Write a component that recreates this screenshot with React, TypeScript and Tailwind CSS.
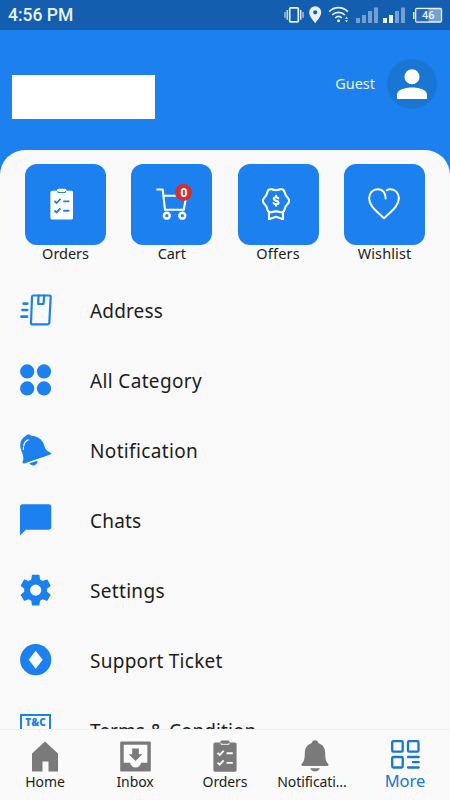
import React from 'react';

type IconProps = { className?: string };

function ClipboardIcon({ className, mark }: IconProps & { mark: string }) {
  return (
    <svg viewBox="0 0 24 32" className={className} fill="currentColor">
      <path d="M2.500 2.500H7C7.300 1 8.200.4 9.500.4h5c1.300 0 2.200.6 2.500 2.100h4.500c1.500 0 2.100.8 2.100 2V30c0 1.200-.8 1.800-2 1.800H2.400c-1.200 0-2-.6-2-1.800V4.500c0-1.200.7-2 2.100-2Z" />
      <g fill="none" stroke={mark} strokeWidth="1.900">
        <path d="M8 2.800v1.500h8V2.800" strokeWidth="1" />
        <path d="m4.500 13 2.200 2 4-4.200M13.500 13.300h6.300M4.500 22.600l2.200 2 4-4.200M13.500 22.900h6.300" />
      </g>
    </svg>
  );
}

function CartIcon({ className }: IconProps) {
  return (
    <svg viewBox="0 0 32 32" className={className} fill="none" stroke="currentColor" strokeWidth="2.100" strokeLinecap="round" strokeLinejoin="round">
      <path d="M1.200 1.500h5.500l2.300 20.300h18.800l2.500-14H8" />
      <circle cx="10.800" cy="27.700" r="2.900" strokeWidth="2.500" />
      <circle cx="26.300" cy="27.700" r="2.900" strokeWidth="2.500" />
    </svg>
  );
}

function OfferIcon({ className }: IconProps) {
  return (
    <svg viewBox="0 0 28 32" className={className} fill="none" stroke="currentColor" strokeWidth="2.100" strokeLinejoin="round" strokeLinecap="round">
      <path d="M9.500 1.300Q14 3 18.500 1.300c2-.4 3.500.6 4 2.500.5 2.700 1.400 4.300 3.400 6.300 1.700 1.800 1.700 3.700 0 5.500-2 2-2.900 3.500-3.400 6.100-.5 2-2 2.900-4 2.500q-4.500-1.600-9 0c-2 .4-3.500-.5-4-2.500-.5-2.600-1.400-4.100-3.400-6.100-1.700-1.800-1.700-3.700 0-5.500 2-2 2.900-3.600 3.400-6.300.5-1.900 2-2.900 4-2.500Z" />
      <path d="M7 24.200v7L14 28.700l7 2.500v-7" />
      <path d="M16.300 10.300c-.4-.8-1.100-1.100-2.200-1.100-1.400 0-2.300.6-2.300 1.600 0 2.500 4.700 1.200 4.700 3.700 0 1.200-.9 1.800-2.400 1.800-1.300 0-2.100-.5-2.500-1.300M14 7.700v1.500M14 16.400v1.400" />
    </svg>
  );
}

function HeartIcon({ className }: IconProps) {
  return (
    <svg viewBox="0 0 32 32" className={className} fill="none" stroke="currentColor" strokeWidth="2" strokeLinecap="round" strokeLinejoin="round">
      <path d="M17.700 10.500c.1-5.200-2.900-9.200-7.900-9.200-5.200 0-8.700 3.900-8.700 9C1.100 18 8.500 23.300 16 30.200c7.500-6.900 14.900-12.200 14.900-19.900 0-5.100-3.500-9-8.700-9-1.300 0-2.500.3-3.400 1" />
    </svg>
  );
}

function AddressIcon() {
  return (
    <svg viewBox="0 0 32 32" className="size-8" fill="none" stroke="currentColor" strokeWidth="2.200" strokeLinecap="round" strokeLinejoin="round">
      <path d="M13 1.500h16.500c.9 0 1.300.6 1.200 1.400L29.300 29c-.1.900-.6 1.400-1.500 1.400H12.200c-.9 0-1.300-.5-1.200-1.400l1-26.100c0-.9.300-1.400 1-1.400Z" />
      <path d="M18.500 1.700 18.200 10h5.300l.7-8.300" />
      <path d="M3.700 9.700h3.500M2.500 16h4.700M1.500 22.700H7" strokeWidth="2.700" />
    </svg>
  );
}

function CategoryIcon() {
  return (
    <svg viewBox="0 0 32 32" className="size-8" fill="currentColor">
      <circle cx="7.200" cy="7.400" r="7.100" />
      <circle cx="24" cy="7.400" r="7.100" />
      <circle cx="7.200" cy="24.400" r="7.100" />
      <circle cx="24" cy="24.400" r="7.100" />
    </svg>
  );
}

function TiltedBellIcon() {
  return (
    <svg viewBox="0 0 32 32" className="size-8" fill="currentColor">
      <path d="M5.600 2.100C6.200.9 7.300.4 8.500.4c1.300 0 2.100.6 2.700 1.400 5.200.2 9.800 2.600 12 7 1.300 2.800 1.400 5 3.100 7.100 1.300 1.600 4.100 2 4.900 3.500.2.500-.2.800-.8 1L4.300 29.500c-1.100.3-1.900-.3-1.700-1.300.4-1.800 1-3.300.7-5.200C2.700 18.900.4 15.900.2 11.600.1 7.500 2 4 5.600 2.100Z" />
      <path d="m9.300 29.200 8.300-2.400c.2 2.300-1.500 4.200-3.500 4.600-2 .3-3.800-.7-4.800-2.200Z" />
      <path d="M3.400 15.500v-2.200M3.700 11.800c.4-2.900 2-4.900 4.500-5.900" fill="none" stroke="#f9f9f9" strokeWidth="1.200" strokeLinecap="round" />
    </svg>
  );
}

function ChatIcon() {
  return (
    <svg viewBox="0 0 32 32" className="size-8" fill="currentColor">
      <path d="M2.500.3h26.300c1.500 0 2.500 1 2.500 2.500v20.500c0 1.500-1 2.500-2.500 2.500H6L0 31.500V2.800C0 1.300 1 .3 2.500.3Z" />
    </svg>
  );
}

function GearIcon() {
  return (
    <svg viewBox="2.200 1.900 20 20" className="size-8" fill="currentColor">
      <path d="M19.140 12.940c.04-.3.060-.61.060-.94 0-.32-.02-.64-.07-.94l2.030-1.580c.18-.14.23-.41.120-.61l-1.920-3.320c-.12-.22-.37-.29-.59-.22l-2.390.96c-.5-.38-1.030-.7-1.620-.94l-.36-2.540c-.04-.24-.24-.41-.48-.41h-3.840c-.24 0-.43.17-.47.41l-.36 2.540c-.59.24-1.130.57-1.620.94l-2.390-.96c-.22-.08-.47 0-.59.22L2.740 8.870c-.12.21-.08.47.120.61l2.030 1.580c-.05.3-.09.630-.09.94s.02.64.070.94l-2.030 1.580c-.18.14-.23.410-.12.61l1.920 3.320c.12.22.37.29.59.22l2.390-.96c.5.38 1.030.7 1.620.94l.36 2.540c.05.24.24.41.48.41h3.840c.24 0 .44-.17.47-.41l.36-2.540c.59-.24 1.130-.56 1.620-.94l2.390.96c.22.08.47 0 .59-.22l1.920-3.320c.12-.22.070-.47-.12-.61l-2.010-1.580ZM12 15.500A3.500 3.500 0 1 1 12 8.500a3.500 3.500 0 0 1 0 7Z" />
    </svg>
  );
}

function TicketIcon() {
  return (
    <svg viewBox="0 0 32 32" className="size-8" fill="currentColor">
      <circle cx="15.700" cy="15.700" r="15.600" />
      <path d="m15.700 6.800 7 9-7 9-7-9Z" fill="#f9f9f9" />
    </svg>
  );
}

function TermsIcon() {
  return (
    <div className="h-8 w-[31px] border-2 border-[#1c80ee] pt-[1px] text-center font-['Open_Sans',sans-serif] text-[10px] leading-[11px] font-extrabold">
      T&amp;C
    </div>
  );
}

function HomeIcon() {
  return (
    <svg viewBox="0 0 26 31" className="h-[31px] w-[26px]" fill="currentColor">
      <path d="M0 12.500 13 .5l13 12v18h-9.500V20.500h-6v10H0Z" />
    </svg>
  );
}

function InboxIcon() {
  return (
    <svg viewBox="0 0 31 31" className="size-[31px]">
      <path fill="currentColor" fillRule="evenodd" d="M1.500.5h28c.9 0 1.300.4 1.300 1.300v27.400c0 .9-.4 1.300-1.300 1.300h-28C.6 30.500.2 30.100.2 29.200V1.800C.2.900.6.500 1.500.5ZM3.700 3.700v18h6.400c.8 2.800 2.700 4.800 5.500 4.800s4.700-2 5.500-4.800h6.300v-18Z" />
      <path fill="currentColor" d="M12.200 7.500h6.600v5.700h3.500l-6.800 6.700-6.700-6.700h3.400Z" />
    </svg>
  );
}

function BellIcon() {
  return (
    <svg viewBox="0 0 28 32" className="h-8 w-7" fill="currentColor">
      <path d="M14 .3c1.700 0 3 1.100 3.200 2.600 4.500 1.400 7 5 7 9.600 0 6.600.7 9 3 11.200.7 1 .2 2.300-1.100 2.300H1.900C.6 26 .1 24.700.8 23.700c2.300-2.200 3-4.600 3-11.200 0-4.600 2.500-8.200 7-9.600C11 1.400 12.300.3 14 .3ZM9.200 28.200h9.600c-.6 2-2.500 3.100-4.800 3.100s-4.200-1.100-4.800-3.100Z" />
    </svg>
  );
}

function MoreIcon() {
  return (
    <svg viewBox="0 0 29 29" className="size-[29px]" fill="none" stroke="currentColor" strokeWidth="2.300" strokeLinecap="round">
      <rect x="1.200" y="1.200" width="10.500" height="10.500" rx="1.200" />
      <rect x="17" y="1.200" width="10.500" height="10.500" rx="1.200" />
      <rect x="1.200" y="17" width="10.500" height="10.500" rx="1.200" />
      <path d="M17 17h10.700M22 22.200h5.700M17 27.500h10.700" />
    </svg>
  );
}

function StatusIcons() {
  return (
    <svg viewBox="0 0 160 20" className="h-5 w-40" fill="#e8f3fc">
      <g fill="none" stroke="#e8f3fc">
        <rect x="5.700" y="2.800" width="8.600" height="14" rx=".8" strokeWidth="1.700" />
        <path d="M3.200 5v9.800M16.800 5v9.800" strokeWidth="1.300" />
        <path d="M1 7v5.800M19 7v5.800" strokeWidth="1" />
      </g>
      <g transform="translate(6 0)">
        <path fillRule="evenodd" d="M25.200 1.200a6 6 0 0 1 6 6c0 4-3.800 8-6 11-2.200-3-6-7-6-11a6 6 0 0 1 6-6Zm0 4a2.100 2.100 0 1 0 0 4.200 2.100 2.100 0 0 0 0-4.200Z" />
        <g fill="none" stroke="#e8f3fc" strokeWidth="1.700">
          <path d="M39.200 6.700c5.300-5.300 13.300-5.300 18.600 0M42.200 10c3.700-3.600 9-3.600 12.700 0M45.200 13c2-1.900 4.600-1.900 6.600 0" />
        </g>
        <circle cx="48.500" cy="15.800" r="1.500" />
        <path d="m55 13.800 1.500-2 1.500 2ZM55 15.300l1.500 2 1.500-2Z" />
        <g opacity=".45">
          <path d="M66 13h4v5h-4ZM72 10h4v8h-4ZM78 6h4v12h-4ZM84 2.500h4V18h-4ZM105 6h4v12h-4ZM111 2.500h4V18h-4Z" />
        </g>
        <path d="M93 13h4v5h-4ZM99 10h4v8h-4Z" />
        <rect x="125.700" y="3.500" width="25.800" height="13.500" rx="1.200" fill="#72a2d3" stroke="#e8f3fc" strokeWidth="1.300" />
        <path d="M126.500 4.200H138.500V16.300h-12Z" fill="#2868b2" />
        <path d="M123 7h1.500v7H123Z" />
        <text x="138.300" y="14.200" textAnchor="middle" fontSize="11" fontWeight="500" fontFamily="Roboto, sans-serif">46</text>
      </g>
    </svg>
  );
}

const TILES = [
  { label: 'Orders', tracking: 'tracking-[-0.050px]', icon: <ClipboardIcon className="mr-2 h-8 w-[23.500px]" mark="#1c80ee" /> },
  { label: 'Cart', tracking: 'tracking-[-0.100px]', icon: <CartIcon className="size-8" />, badge: 0 },
  { label: 'Offers', tracking: 'tracking-[0.200px]', icon: <OfferIcon className="mr-1 h-8 w-7" /> },
  { label: 'Wishlist', tracking: 'tracking-[0.100px]', icon: <HeartIcon className="size-8" /> },
];

const MENU = [
  { label: 'Address', tracking: 'tracking-[0.150px]', icon: <AddressIcon /> },
  { label: 'All Category', tracking: 'tracking-[0.350px]', icon: <CategoryIcon /> },
  { label: 'Notification', tracking: 'tracking-[0.350px]', icon: <TiltedBellIcon /> },
  { label: 'Chats', tracking: 'tracking-[0.200px]', icon: <ChatIcon /> },
  { label: 'Settings', tracking: 'tracking-[0.320px]', icon: <GearIcon /> },
  { label: 'Support Ticket', tracking: 'tracking-[0.260px]', icon: <TicketIcon /> },
  { label: 'Terms & Condition', tracking: 'tracking-[0.060px]', icon: <TermsIcon /> },
];

const NAV = [
  { label: 'Home', icon: <HomeIcon /> },
  { label: 'Inbox', icon: <InboxIcon /> },
  { label: 'Orders', icon: <ClipboardIcon className="h-8 w-6" mark="#fafafa" /> },
  { label: 'Notificati…', icon: <BellIcon />, shift: 'mr-[6px]' },
];

export default function App() {
  return (
    <div className="flex h-[800px] w-[450px] flex-col overflow-hidden bg-[#1c80ee] font-['Noto_Sans',sans-serif]">
      {/* Status bar */}
      <div className="flex h-[30px] shrink-0 items-center justify-between bg-[#145eb0] pl-2">
        <span className="pt-[2px] font-['Roboto',sans-serif] text-[17.500px] leading-none font-medium text-[#e8f3fc]">4:56 PM</span>
        <div className="mr-[6px]"><StatusIcons /></div>
      </div>

      {/* Header */}
      <header className="flex h-[120px] shrink-0 items-start justify-between pr-[13px] pl-3">
        <div className="mt-[45px] h-[44px] w-[143px] bg-white" />
        <div className="mt-[29px] flex items-center gap-3">
          <span className="text-[14.500px] text-[#e8f3fc]">Guest</span>
          <div className="flex size-[50px] items-center justify-center rounded-full bg-[#1976d2]">
            <svg viewBox="0 0 30 30" className="size-[30px]" fill="white">
              <circle cx="15" cy="7.700" r="7.500" />
              <path d="M0 30v-4.200C0 20.800 8 18.500 15 18.500s15 2.300 15 7.300V30Z" />
            </svg>
          </div>
        </div>
      </header>

      {/* Content sheet */}
      <main className="min-h-0 flex-1 overflow-hidden rounded-t-[25px] bg-[#f9f9f9] pt-[14px]">
        <div className="flex justify-between px-[25px]">
          {TILES.map((tile) => (
            <div key={tile.label} className="flex w-[81px] flex-col items-center">
              <div className="relative flex h-[80.500px] w-[81px] items-center justify-center rounded-[12px] bg-[#1c80ee] text-white">
                {tile.icon}
                {tile.badge !== undefined && (
                  <span className="absolute top-[20px] left-[44px] flex size-[17px] items-center justify-center rounded-full bg-[#d32f2f] text-[12px] leading-none font-bold">
                    {tile.badge}
                  </span>
                )}
              </div>
              <span className={`text-[14.500px] leading-[17px] text-[#1c1c1c] ${tile.tracking}`}>{tile.label}</span>
            </div>
          ))}
        </div>
        <div className="mt-[13.500px]">
          {MENU.map((item) => (
            <div key={item.label} className="flex h-[70px] items-center pl-5">
              <div className="w-[70px] text-[#1c80ee]">{item.icon}</div>
              <span className={`pt-[2px] text-[19px] whitespace-nowrap text-[#1c1c1c] ${item.tracking}`}>{item.label}</span>
            </div>
          ))}
        </div>
      </main>

      {/* Bottom navigation */}
      <nav className="grid h-[71px] shrink-0 grid-cols-5 border-t border-[#eeeeee] bg-[#fafafa]">
        {NAV.map((item) => (
          <div key={item.label} className="flex flex-col items-center pt-[10px]">
            <div className="flex h-8 items-center text-[#7a7a7a]">{item.icon}</div>
            <span className={`text-[14px] leading-[20px] tracking-[-0.100px] whitespace-nowrap text-[#1c1c1c] ${item.shift ?? ''}`}>
              {item.label}
            </span>
          </div>
        ))}
        <div className="flex flex-col items-center pt-[10px] text-[#1976d2]">
          <MoreIcon />
          <span className="text-[16.500px] leading-[23px]">More</span>
        </div>
      </nav>
    </div>
  );
}
